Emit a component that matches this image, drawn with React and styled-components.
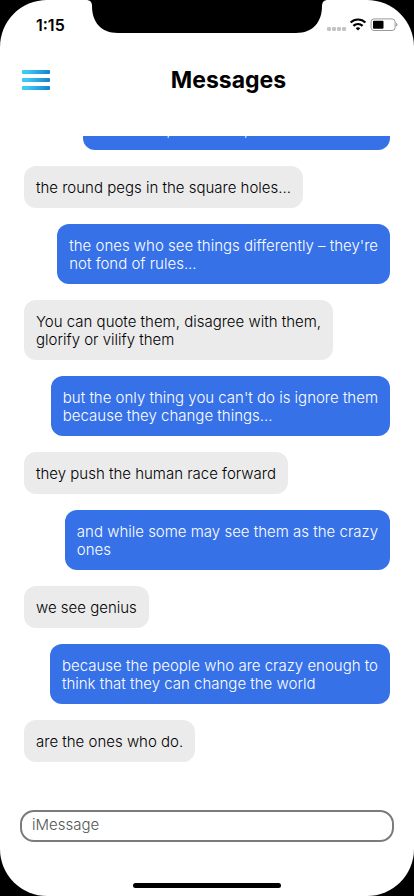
import React from "react";
import styled, { createGlobalStyle } from "styled-components";

const GlobalStyle = createGlobalStyle`
  *, *::before, *::after { box-sizing: border-box; }
  body {
    margin: 0;
    background: #000;
    color: #000;
    font-family: Inter, "Noto Sans", sans-serif;
  }
`;

const Phone = styled.div`
  display: flex;
  flex-direction: column;
  height: 100vh;
  overflow: hidden;
  border-radius: 47px;
  background: #fff;
`;

const StatusBar = styled.div`
  display: grid;
  grid-template-columns: minmax(0, 1fr) 242px minmax(0, 1fr);
  flex: none;
  height: 44px;
`;

const Clock = styled.time`
  padding: 16px 0 0 36px;
  font-size: 16px;
  line-height: 18px;
  font-weight: 600;
`;

const Notch = styled.svg`
  display: block;
  width: 242px;
  height: 33px;
`;

const Indicators = styled.svg`
  display: block;
  width: 72px;
  height: 16px;
  margin-top: 17px;
  justify-self: end;
  margin-right: 16px;
`;

const Header = styled.header`
  display: grid;
  grid-template-columns: 28px 1fr;
  align-items: center;
  flex: none;
  height: 72px;
  padding: 0 22px;
`;

const MenuButton = styled.button`
  display: flex;
  flex-direction: column;
  gap: 4px;
  width: 28px;
  padding: 0;
  border: 0;
  background: none;
  cursor: pointer;
`;

const MenuBar = styled.span`
  height: 4px;
  border-radius: 1px;
  background: linear-gradient(110deg, #3acaf4 20%, #127fd0);
`;

const Title = styled.h1`
  margin: 0;
  padding-left: 15px;
  text-align: center;
  font-size: 23px;
  line-height: 30px;
  font-weight: 700;
`;

const Thread = styled.ul`
  display: flex;
  flex: 1;
  flex-direction: column;
  justify-content: flex-end;
  gap: 16px;
  min-height: 0;
  margin: 20px 0 0;
  padding: 0 24px 48px;
  overflow: hidden;
  list-style: none;
`;

const Bubble = styled.li`
  flex: none;
  align-self: ${({ $sent }) => ($sent ? "flex-end" : "flex-start")};
  max-width: 100%;
  padding: 13px 12px 11px;
  border-radius: 12px;
  background: ${({ $sent }) => ($sent ? "#3671e8" : "#ebebeb")};
  color: ${({ $sent }) => ($sent ? "#fff" : "#000")};
  font-size: 15px;
  font-weight: 300;
  line-height: 18px;
  white-space: pre-line;
`;

const Composer = styled.form`
  display: flex;
  flex: none;
  padding: 0 20px;
`;

const MessageInput = styled.input`
  flex: 1;
  min-width: 0;
  height: 32px;
  padding: 0 10px 4px;
  border: 2px solid #7b7b7b;
  border-radius: 14px;
  background: #fff;
  color: #000;
  font-family: inherit;
  font-size: 15px;
  font-weight: 300;
  &::placeholder { color: #555; opacity: 1; }
`;

const HomeArea = styled.footer`
  display: flex;
  flex: none;
  align-items: flex-end;
  justify-content: center;
  height: 54px;
  padding-bottom: 8px;
`;

const HomeIndicator = styled.span`
  width: 148px;
  height: 5px;
  border-radius: 3px;
  background: #000;
`;

const messages = [
  { sent: true, text: "the misfits, the rebels, the troublemakers" },
  { sent: false, text: "the round pegs in the square holes..." },
  { sent: true, text: "the ones who see things differently – they're\nnot fond of rules..." },
  { sent: false, text: "You can quote them, disagree with them,\nglorify or vilify them" },
  { sent: true, text: "but the only thing you can't do is ignore them\nbecause they change things..." },
  { sent: false, text: "they push the human race forward" },
  { sent: true, text: "and while some may see them as the crazy\nones" },
  { sent: false, text: "we see genius" },
  { sent: true, text: "because the people who are crazy enough to\nthink that they can change the world" },
  { sent: false, text: "are the ones who do." },
];

function StatusIcons() {
  return (
    <Indicators viewBox="0 0 72 16" aria-hidden="true">
      <g fill="#c4c4c4">
        <rect x="1" y="10" width="4" height="4" rx="1.2" />
        <rect x="6" y="10" width="4" height="4" rx="1.2" />
        <rect x="11" y="10" width="4" height="4" rx="1.2" />
        <rect x="16" y="10" width="4" height="4" rx="1.2" />
      </g>
      <g fill="none" stroke="#000" strokeWidth="2.2">
        <path d="M24.6 5.6a10.4 10.4 0 0 1 14.8 0" />
        <path d="M27.4 8.9a6.5 6.5 0 0 1 9.2 0" />
      </g>
      <path d="M29.7 11.2a3.4 3.4 0 0 1 4.6 0L32 13.6z" />
      <rect x="45.1" y="1.9" width="24" height="11.6" rx="3" fill="none" stroke="#999" />
      <rect x="47" y="3.7" width="10.5" height="8" rx="1" />
      <path d="M70.2 5.6c1.8.8 1.8 3.4 0 4.2z" fill="#999" />
    </Indicators>
  );
}

export default function App() {
  return (
    <>
      <GlobalStyle />
      <Phone>
        <StatusBar>
          <Clock>1:15</Clock>
          <Notch viewBox="0 0 242 33" aria-hidden="true">
            <path d="M0 0H242C238 0 236 2 236 6C236 22 227 33 210 33H32C15 33 6 22 6 6C6 2 4 0 0 0Z" />
          </Notch>
          <StatusIcons />
        </StatusBar>
        <Header>
          <MenuButton type="button" aria-label="Open menu">
            <MenuBar />
            <MenuBar />
            <MenuBar />
          </MenuButton>
          <Title>Messages</Title>
        </Header>
        <Thread>
          {messages.map(({ sent, text }) => (
            <Bubble key={text} $sent={sent}>{text}</Bubble>
          ))}
        </Thread>
        <Composer onSubmit={(event) => event.preventDefault()}>
          <MessageInput type="text" aria-label="iMessage" placeholder="iMessage" />
        </Composer>
        <HomeArea>
          <HomeIndicator />
        </HomeArea>
      </Phone>
    </>
  );
}
